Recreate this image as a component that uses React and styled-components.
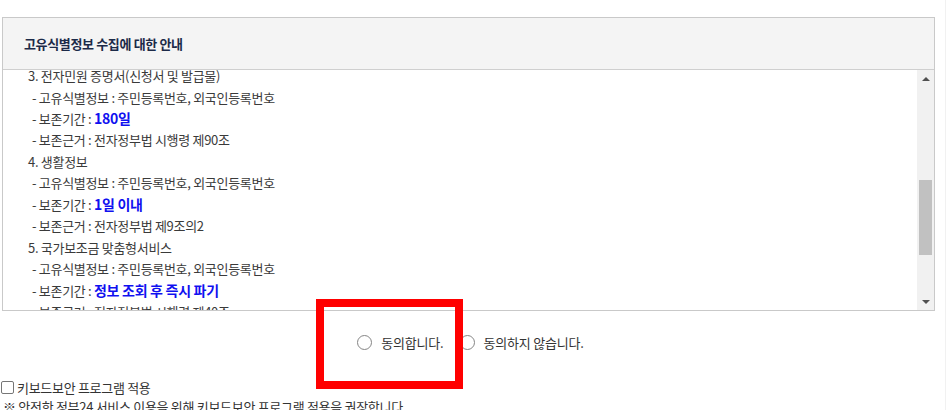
import React, { useEffect, useRef } from "react";
import styled, { createGlobalStyle } from "styled-components";

const GlobalStyle = createGlobalStyle`
  html, body { margin: 0; padding: 0; background: #fff; }
  body {
    font-family: "Noto Sans CJK KR", "Noto Sans", sans-serif;
    color: #333;
  }
  * { box-sizing: border-box; }
`;

const Page = styled.div`
  position: relative;
  width: 946px;
  height: 410px;
  overflow: hidden;
  padding: 17px 0 0 2px;
  border-right: 1px solid #f1f1f1;
`;

const Box = styled.section`
  width: 933px;
  border: 1px solid #c9c9c9;
`;

const Header = styled.header`
  height: 52px;
  display: flex;
  align-items: center;
  padding-left: 21px;
  background: #f4f4f4;
  border-bottom: 1px solid #cfcfcf;
`;

const Title = styled.h2`
  margin: 0;
  font-size: 13px;
  font-weight: 700;
  letter-spacing: -0.35px;
  color: #1c2a48;
`;

const Body = styled.div`
  display: flex;
  height: 240px;
`;

const Scroll = styled.div`
  position: relative;
  flex: 1;
  overflow-y: scroll;
  scrollbar-width: none;
  padding: 4px 0 0 25px;
  &::-webkit-scrollbar { display: none; }
`;

const Line = styled.p`
  margin: 0;
  padding-left: ${(p) => (p.$sub ? 4 : 0)}px;
  font-size: 13px;
  line-height: 21.45px;
  letter-spacing: -0.3px;
  color: #3a3a3a;
  white-space: nowrap;
`;

const Em = styled.strong`
  font-weight: 700;
  font-size: 14px;
  color: #1010f0;
  letter-spacing: -0.3px;
`;

const Bar = styled.div`
  width: 17px;
  display: flex;
  flex-direction: column;
  background: #f1f1f1;
`;

const Arrow = styled.div`
  height: 17px;
  display: flex;
  align-items: center;
  justify-content: center;
  &::after {
    content: "";
    width: 0;
    height: 0;
    border-left: 4px solid transparent;
    border-right: 4px solid transparent;
    ${(p) =>
      p.$down
        ? "border-top: 4px solid #505050;"
        : "border-bottom: 4px solid #505050;"}
  }
`;

const Track = styled.div`
  flex: 1;
  padding: 93px 2px 0;
`;

const Thumb = styled.div`
  height: 75px;
  background: #c1c1c1;
`;

const Choices = styled.div`
  width: 933px;
  height: 66px;
  display: flex;
  align-items: center;
  justify-content: center;
  gap: 16px;
  padding: 0 0 4px 4px;
`;

const Choice = styled.label`
  display: flex;
  align-items: center;
  gap: 9px;
  font-size: 13px;
  letter-spacing: -0.2px;
  color: #333;
  cursor: pointer;
`;

const Radio = styled.input.attrs({ type: "radio" })`
  appearance: none;
  margin: 0;
  width: 15px;
  height: 15px;
  border: 1px solid #858585;
  border-radius: 50%;
  background: #fff;
  &:checked { box-shadow: inset 0 0 0 3px #fff; background: #333; }
`;

const CheckRow = styled.label`
  display: flex;
  align-items: center;
  gap: 3px;
  margin-left: -1px;
  height: 20px;
  font-size: 13px;
  letter-spacing: -0.3px;
  color: #333;
`;

const Check = styled.input.attrs({ type: "checkbox" })`
  appearance: none;
  margin: 0;
  width: 13px;
  height: 13px;
  border: 1px solid #767676;
  border-radius: 2px;
  background: #fff;
`;

const Notice = styled.p`
  margin: 0 0 0 1px;
  font-size: 13px;
  line-height: 20px;
  letter-spacing: -0.3px;
  color: #333;
  white-space: nowrap;
`;

const Highlight = styled.div`
  position: absolute;
  left: 316px;
  top: 299px;
  width: 147px;
  height: 90px;
  border: 8px solid #ff0000;
  pointer-events: none;
`;

const items = [
  {
    title: "1. 민원신청 및 처리",
    lines: [
      ["- 고유식별정보 : 주민등록번호, 외국인등록번호"],
      ["- 보존기간 : ", "민원사무별 보존기간"],
      ["- 보존근거 : 민원처리에 관한 법률 시행령 제6조"],
    ],
  },
  {
    title: "2. 회원가입 및 본인확인",
    lines: [
      ["- 고유식별정보 : 주민등록번호, 외국인등록번호"],
      ["- 보존기간 : ", "회원탈퇴 시까지"],
      ["- 보존근거 : 전자정부법 제9조"],
    ],
  },
  {
    title: "3. 전자민원 증명서(신청서 및 발급물)",
    anchor: true,
    lines: [
      ["- 고유식별정보 : 주민등록번호, 외국인등록번호"],
      ["- 보존기간 : ", "180일"],
      ["- 보존근거 : 전자정부법 시행령 제90조"],
    ],
  },
  {
    title: "4. 생활정보",
    lines: [
      ["- 고유식별정보 : 주민등록번호, 외국인등록번호"],
      ["- 보존기간 : ", "1일 이내"],
      ["- 보존근거 : 전자정부법 제9조의2"],
    ],
  },
  {
    title: "5. 국가보조금 맞춤형서비스",
    lines: [
      ["- 고유식별정보 : 주민등록번호, 외국인등록번호"],
      ["- 보존기간 : ", "정보 조회 후 즉시 파기"],
      ["- 보존근거 : 전자정부법 시행령 제40조"],
    ],
  },
];

export default function App() {
  const scrollRef = useRef(null);
  const anchorRef = useRef(null);

  useEffect(() => {
    if (scrollRef.current && anchorRef.current) {
      scrollRef.current.scrollTop = anchorRef.current.offsetTop + 5;
    }
  }, []);

  return (
    <>
      <GlobalStyle />
      <Page>
        <Box>
          <Header>
            <Title>고유식별정보 수집에 대한 안내</Title>
          </Header>
          <Body>
            <Scroll ref={scrollRef}>
              <Line>정부24는 「개인정보 보호법」 제24조에 따라 아래와 같이 고유식별정보를 수집합니다.</Line>
              {items.map((it) => (
                <React.Fragment key={it.title}>
                  <Line ref={it.anchor ? anchorRef : undefined}>{it.title}</Line>
                  {it.lines.map(([a, b]) => (
                    <Line $sub key={a + (b || "")}>
                      {a}
                      {b && <Em>{b}</Em>}
                    </Line>
                  ))}
                </React.Fragment>
              ))}
              <Line>※ 위의 고유식별정보 수집에 동의하지 않으실 경우 서비스 이용이 제한될 수 있습니다.</Line>
            </Scroll>
            <Bar>
              <Arrow />
              <Track>
                <Thumb />
              </Track>
              <Arrow $down />
            </Bar>
          </Body>
        </Box>
        <Choices>
          <Choice>
            <Radio name="agree" />
            동의합니다.
          </Choice>
          <Choice>
            <Radio name="agree" />
            동의하지 않습니다.
          </Choice>
        </Choices>
        <CheckRow>
          <Check />
          키보드보안 프로그램 적용
        </CheckRow>
        <Notice>※ 안전한 정부24 서비스 이용을 위해 키보드보안 프로그램 적용을 권장합니다.</Notice>
        <Highlight />
      </Page>
    </>
  );
}
